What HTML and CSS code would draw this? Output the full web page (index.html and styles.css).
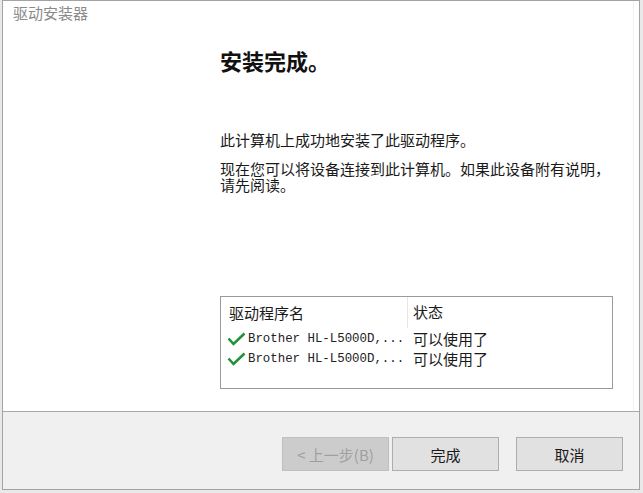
FILE: index.html
```html
<!DOCTYPE html>
<html lang="zh-CN">
<head>
    <meta charset="UTF-8">
    <meta name="viewport" content="width=device-width, initial-scale=1.0">
    <title>驱动安装器</title>
    <link rel="stylesheet" href="styles.css">
</head>
<body>
    <div class="window">
        <div class="content">
            <div class="title">驱动安装器</div>
            <div class="main">
                <h1>安装完成。</h1>
                <p class="msg">此计算机上成功地安装了此驱动程序。</p>
                <p class="msg tight">现在您可以将设备连接到此计算机。如果此设备附有说明，<br>请先阅读。</p>

                <div class="list">
                    <div class="list-head">
                        <div class="col-name">驱动程序名</div>
                        <div class="col-state">状态</div>
                    </div>
                    <div class="list-row">
                        <div class="col-name">
                            <svg class="check" width="19" height="14" viewBox="0 0 19 14">
                                <path d="M1.5 6.5 L6.5 12 L17.5 1.5" fill="none" stroke="#23903a" stroke-width="2.6"/>
                            </svg>
                            <span class="mono">Brother HL-L5000D,...</span>
                        </div>
                        <div class="col-state">可以使用了</div>
                    </div>
                    <div class="list-row">
                        <div class="col-name">
                            <svg class="check" width="19" height="14" viewBox="0 0 19 14">
                                <path d="M1.5 6.5 L6.5 12 L17.5 1.5" fill="none" stroke="#23903a" stroke-width="2.6"/>
                            </svg>
                            <span class="mono">Brother HL-L5000D,...</span>
                        </div>
                        <div class="col-state">可以使用了</div>
                    </div>
                </div>
            </div>
        </div>

        <div class="footer">
            <button class="btn" disabled>&lt; 上一步(<u>B</u>)</button>
            <button class="btn">完成</button>
            <button class="btn cancel">取消</button>
        </div>
    </div>
</body>
</html>
```

FILE: styles.css
```css
body {
    margin: 0;
    background: #e9e9e9;
    font-family: "Noto Sans CJK SC", "Microsoft YaHei", sans-serif;
    color: #1a1a1a;
}
.window {
    margin-left: 2px;
    width: 636px;
    height: 488px;
    border: 1px solid #a3a3a3;
    background: #fff;
    display: flex;
    flex-direction: column;
}
.content {
    height: 410px;
    border-bottom: 1px solid #a9a9a9;
    box-shadow: inset -5px 0 0 #fff, inset -6px 0 0 #f0f0f0;
}
.title {
    padding: 2px 0 0 10px;
    height: 21px;
    font-size: 15px;
    line-height: 20px;
    color: #8a8a8a;
}
.main {
    padding-left: 217px;
    width: 393px;
}
h1 {
    margin: 22px 0 0;
    font-size: 22px;
    line-height: 28px;
    font-weight: bold;
    color: #111;
}
.msg {
    margin: 57px 0 0;
    font-size: 15px;
    line-height: 18px;
}
.tight {
    margin-top: 12px;
    line-height: 16px;
}
.list {
    margin-top: 103px;
    height: 91px;
    border: 1px solid #9a9a9a;
    font-size: 15px;
}
.list-head {
    display: flex;
    height: 31px;
    align-items: stretch;
}
.list-head .col-name {
    border-right: 1px solid #e6e6e6;
}
.list-head div {
    line-height: 30px;
}
.col-name {
    width: 187px;
    padding-left: 8px;
    box-sizing: border-box;
    display: flex;
    align-items: center;
}
.col-state {
    padding-left: 5px;
}
.list-row {
    display: flex;
    height: 20px;
    line-height: 20px;
    align-items: center;
}
.list-head + .list-row {
    margin-top: 1px;
}
.list-row .col-name {
    padding-left: 6px;
}
.check {
    margin-right: 2px;
}
.mono {
    font-family: "Liberation Mono", "DejaVu Sans Mono", monospace;
    font-size: 12.4px;
    color: #222;
}
.footer {
    flex: 1;
    background: #f0f0f0;
    display: flex;
    justify-content: flex-end;
    align-items: flex-start;
    padding: 25px 16px 0 0;
}
.btn {
    width: 107px;
    height: 34px;
    margin-left: 3px;
    background: #e1e1e1;
    border: 1px solid #adadad;
    font-family: "Noto Sans CJK SC", sans-serif;
    font-size: 15px;
    color: #1a1a1a;
    padding: 0;
}
.btn:disabled {
    background: #cccccc;
    border-color: #bfbfbf;
    color: #a0a0a0;
}
.btn:disabled u {
    text-decoration: none;
}
.cancel {
    margin-left: 17px;
}
```
